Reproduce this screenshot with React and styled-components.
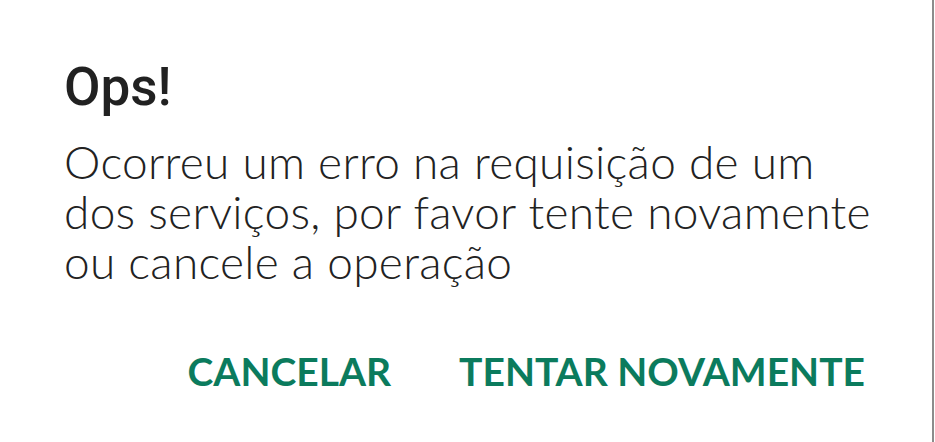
import React from "react";
import styled, { createGlobalStyle } from "styled-components";

const Global = createGlobalStyle`
  html, body { margin: 0; padding: 0; background: #ffffff; }
  body { width: 935px; height: 442px; overflow: hidden; }
`;

const Dialog = styled.div`
  box-sizing: border-box;
  width: 934px;
  height: 442px;
  border-right: 2px solid #8c8c8c;
  background: #ffffff;
  padding: 54px 67px 0 64px;
  display: flex;
  flex-direction: column;
`;

const Title = styled.h1`
  margin: 0;
  font-family: Roboto, "Noto Sans", sans-serif;
  font-weight: 500;
  font-size: 53px;
  line-height: 66px;
  color: #212121;
`;

const Message = styled.p`
  margin: 17px 0 0;
  font-family: Lato, "Open Sans", sans-serif;
  font-weight: 300;
  font-size: 46px;
  letter-spacing: 0.3px;
  line-height: 50px;
  color: #222222;
`;

const Line = styled.span`
  display: block;
  white-space: nowrap;
`;

const Actions = styled.div`
  display: flex;
  justify-content: flex-end;
  gap: 68px;
  margin-top: 62px;
`;

const ActionButton = styled.button`
  border: none;
  background: none;
  padding: 0;
  font-family: Lato, "Open Sans", sans-serif;
  font-weight: 700;
  font-size: 39px;
  line-height: 44px;
  color: #0b7b5d;
  cursor: pointer;
`;

const lines = [
  "Ocorreu um erro na requisição de um",
  "dos serviços, por favor tente novamente",
  "ou cancele a operação",
];

const App = () => {
  return (
    <>
      <Global />
      <Dialog>
        <Title>Ops!</Title>
        <Message>
          {lines.map(line => (
            <Line key={line}>{line}</Line>
          ))}
        </Message>
        <Actions>
          <ActionButton>CANCELAR</ActionButton>
          <ActionButton>TENTAR NOVAMENTE</ActionButton>
        </Actions>
      </Dialog>
    </>
  );
};

export default App;
